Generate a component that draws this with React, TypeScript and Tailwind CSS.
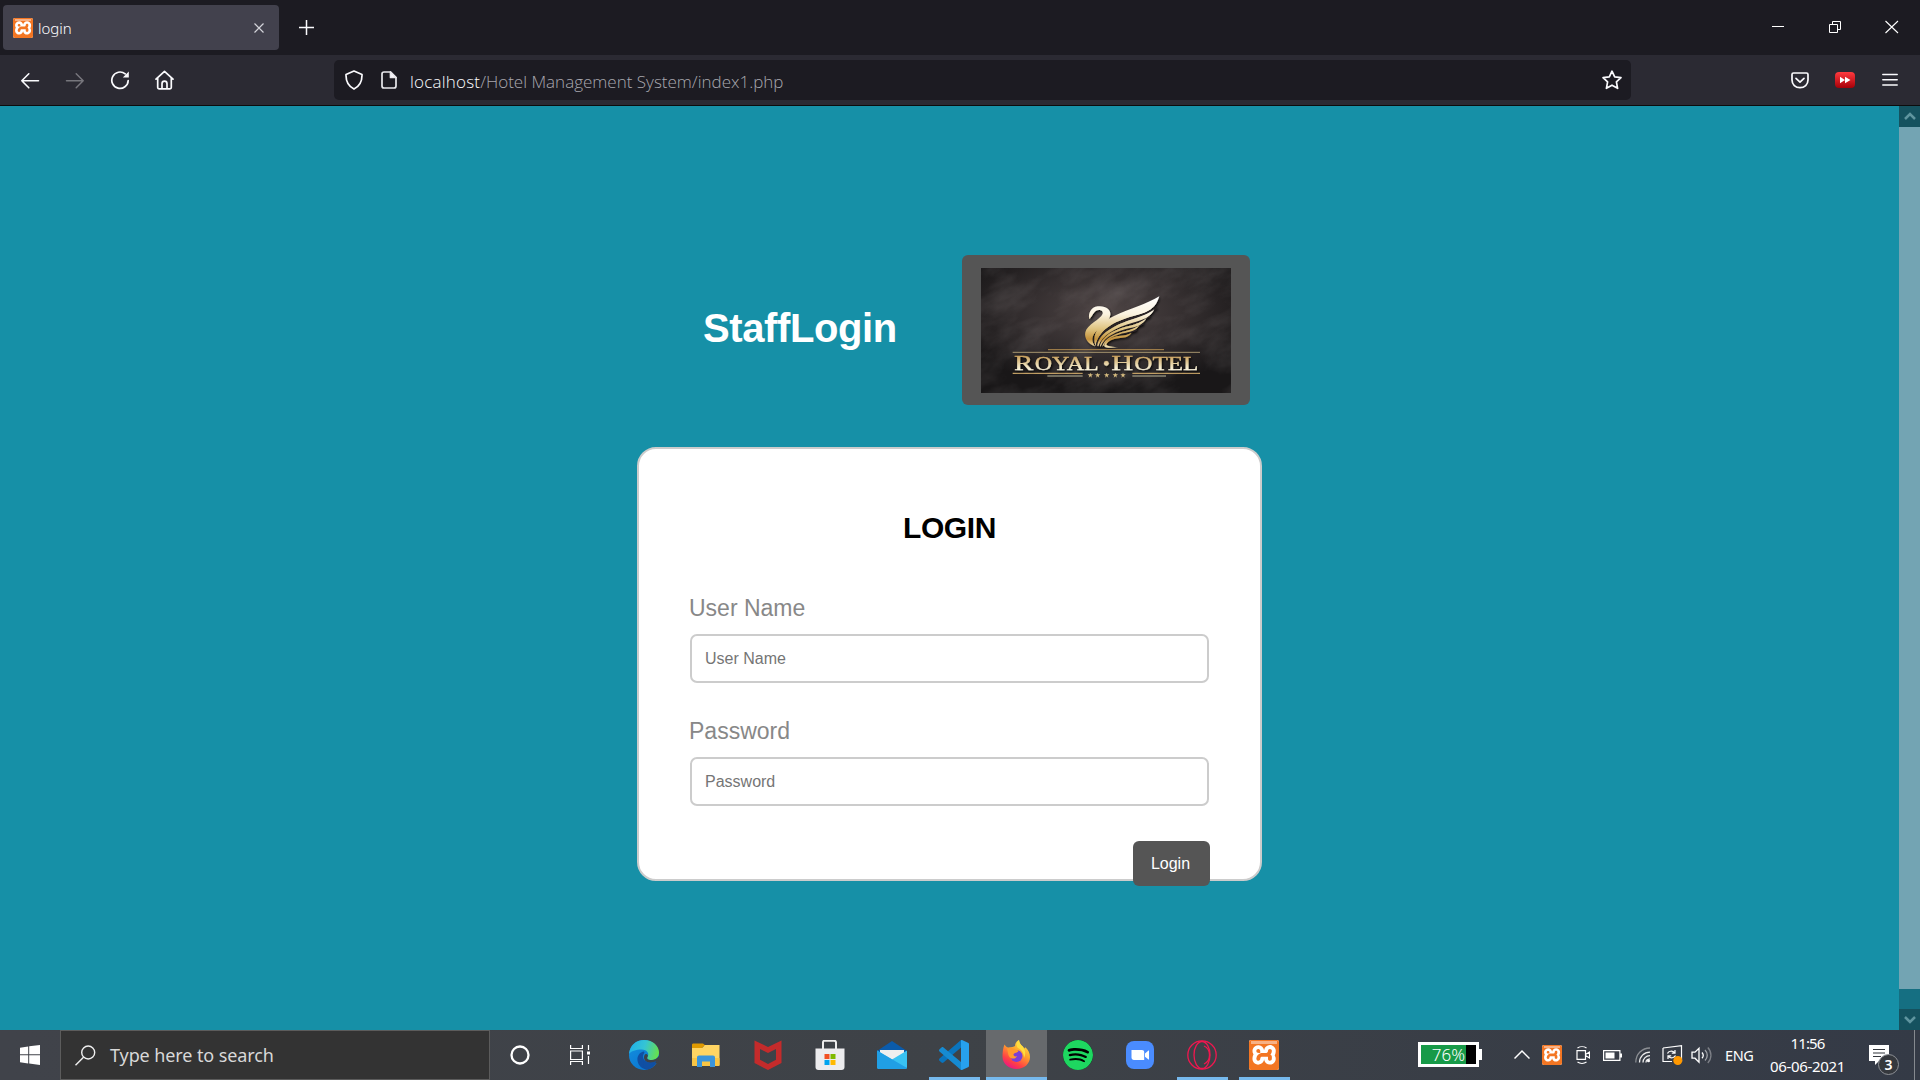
import React from "react";
import { SiXampp, SiSpotify } from "react-icons/si";

function Xampp({ big }: { big?: boolean }) {
  return (
    <span
      className={
        (big ? "h-[30px] w-[30px] " : "h-5 w-5 ") +
        "relative flex shrink-0 items-center justify-center overflow-hidden rounded-[2px] bg-white"
      }
    >
      <SiXampp className={(big ? "h-[32px] w-[32px] " : "h-[22px] w-[22px] ") + "shrink-0 text-[#f37623]"} />
      <span className={(big ? "h-[3px] " : "h-[2px] ") + "absolute inset-x-[2px] top-px bg-[#f8b184]"} />
    </span>
  );
}

function TitleBar() {
  return (
    <div className="flex h-[55px] items-start bg-[#1c1b22] pl-[3px]">
      <div className="mt-[5px] flex h-[45px] w-[276px] items-center rounded-[4px] bg-[#42414d] pr-[14px] pl-[10px]">
        <Xampp />
        <span className="ml-[5px] flex-1 text-[15px] leading-5 font-light text-[#fbfbfe]">login</span>
        <svg width="12" height="12" viewBox="0 0 12 12" stroke="#d3d3da" strokeWidth="1.2" fill="none">
          <path d="M1.5 1.5l9 9M10.5 1.5l-9 9" />
        </svg>
      </div>
      <svg className="mt-5 ml-5" width="15" height="15" viewBox="0 0 15 15" stroke="#fbfbfe" strokeWidth="1.5">
        <path d="M7.5 0v15M0 7.5h15" />
      </svg>
      <div className="mt-[20px] ml-auto flex items-start pr-[21px]">
        <svg width="12" height="14" viewBox="0 0 12 14" stroke="#fff" fill="none">
          <path d="M0 6.5h12" />
        </svg>
        <svg className="ml-[45px]" width="12" height="14" viewBox="0 0 12 14" stroke="#fff" fill="none">
          <path d="M.5 4.500h8v8h-8zM3.500 4.500v-3h8v8h-3" />
        </svg>
        <svg className="ml-[44px]" width="14" height="14" viewBox="0 0 14 14" stroke="#fff" strokeWidth="1.1" fill="none">
          <path d="M.5 1l12.500 12M13 1L.5 13" />
        </svg>
      </div>
    </div>
  );
}

function Toolbar() {
  return (
    <div className="flex h-[51px] items-start border-b border-[#0c0c0d] bg-[#2b2a33] pt-[5px] pl-5">
      <svg className="mt-[12px]" width="20" height="18" viewBox="0 0 20 18" stroke="#fbfbfe" strokeWidth="1.6" fill="none" strokeLinecap="round" strokeLinejoin="round">
        <path d="M18.500 8.800H1.800M8.800 1.800l-7 7 7 7" />
      </svg>
      <svg className="mt-[12px] ml-[25px]" width="20" height="18" viewBox="0 0 20 18" stroke="#77767d" strokeWidth="1.5" fill="none" strokeLinecap="round" strokeLinejoin="round">
        <path d="M1.500 8.800h16.700M11.200 1.800l7 7-7 7" />
      </svg>
      <svg className="mt-[10px] ml-[25px]" width="20" height="20" viewBox="0 0 20 20" stroke="#fbfbfe" strokeWidth="1.7" fill="none" strokeLinecap="round">
        <path d="M18.200 10.500a8.200 8.200 0 1 1-3-6.600" />
        <path d="M18.800 1.500v6h-6z" fill="#fbfbfe" stroke="none" />
      </svg>
      <svg className="mt-[10px] ml-[25px]" width="20" height="20" viewBox="0 0 20 20" stroke="#fbfbfe" strokeWidth="1.700" fill="none" strokeLinejoin="round" strokeLinecap="round">
        <path d="M1 9.200L9.500 1.300 18 9.200M2.700 8v9.500c0 .8.400 1.300 1.300 1.300h11c.9 0 1.300-.5 1.300-1.300V8M7 18.500v-4.800c0-1.500 1-2.500 2.500-2.500s2.500 1 2.500 2.500v4.800" />
      </svg>
      <div className="ml-[159px] flex h-10 w-[1297px] items-center rounded-[5px] bg-[#1c1b22] pr-[9px] pl-[11px]">
        <svg width="18" height="20" viewBox="0 0 18 20" stroke="#fbfbfe" strokeWidth="1.700" fill="none" strokeLinejoin="round">
          <path d="M9 1l8 3.500c.2 6-1.800 11.500-8 14.600C2.800 16 .8 10.500 1 4.500z" />
        </svg>
        <svg className="ml-[18px]" width="16" height="18" viewBox="0 0 16 18" stroke="#e8e8ec" strokeWidth="1.700" fill="none" strokeLinejoin="round">
          <path d="M3 1h6.500L15 6.500V15c0 1.300-.7 2-2 2H3c-1.300 0-2-.7-2-2V3c0-1.300.7-2 2-2z" />
          <path d="M9.500 1v5.500H15z" fill="#fbfbfe" />
        </svg>
        <span className="ml-[13px] flex-1 pt-1 font-['Open_Sans',sans-serif] text-[17px] leading-6 font-light whitespace-nowrap text-[#a9a8af]">
          <span className="tracking-[0.2px] text-[#fbfbfe]">localhost</span>/Hotel Management System/index1.php
        </span>
        <svg width="20" height="20" viewBox="0 0 20 20" stroke="#fbfbfe" strokeWidth="1.700" fill="none" strokeLinejoin="round">
          <path d="M10 1.200l2.700 5.700 6.300.8-4.600 4.200 1.200 6.400-5.600-3.100-5.600 3.100 1.200-6.400L1 7.700l6.300-.8z" />
        </svg>
      </div>
      <div className="mt-[12px] ml-auto flex items-start pr-[22px]">
        <svg width="18" height="17" viewBox="0 0 18 17" stroke="#fbfbfe" strokeWidth="1.700" fill="none" strokeLinecap="round" strokeLinejoin="round">
          <path d="M2.500 1h13c1 0 1.500.5 1.500 1.500V8c0 4.500-3.500 7.700-8 7.700S1 12.500 1 8V2.500C1 1.500 1.500 1 2.500 1z" />
          <path d="M5 6.300l4 3.800 4-3.800" />
        </svg>
        <svg className="ml-[26px]" width="20" height="16" viewBox="0 0 20 16">
          <defs>
            <linearGradient id="yt" x1="0" y1="0" x2="0" y2="1">
              <stop offset="0" stopColor="#ff3a3f" />
              <stop offset="1" stopColor="#a60008" />
            </linearGradient>
          </defs>
          <rect width="20" height="16" rx="4" fill="url(#yt)" />
          <path d="M5 4.800l5 3.200-5 3.200zM10 4.800l5.500 3.200-5.500 3.200z" fill="#fff" />
        </svg>
        <svg className="mt-[1px] ml-[27px]" width="16" height="14" viewBox="0 0 16 14" stroke="#fbfbfe" strokeWidth="1.500" strokeLinecap="round">
          <path d="M.8 1.500h14.400M.8 6.700h14.400M.8 12h14.400" />
        </svg>
      </div>
    </div>
  );
}

function HotelLogo() {
  const stars = [421, 443, 470, 496, 519];
  return (
    <svg width="250" height="125" viewBox="93 69 750 375">
      <defs>
        <radialGradient id="stone" cx="0.5" cy="0.35" r="0.62">
          <stop offset="0" stopColor="#4e4545" />
          <stop offset="0.5" stopColor="#352f30" />
          <stop offset="1" stopColor="#191718" />
        </radialGradient>
        <linearGradient id="gold" gradientUnits="userSpaceOnUse" x1="0" y1="155" x2="0" y2="305">
          <stop offset="0" stopColor="#fff" />
          <stop offset="0.35" stopColor="#fbf3e0" />
          <stop offset="0.65" stopColor="#dfc37f" />
          <stop offset="0.85" stopColor="#c4913a" />
          <stop offset="1" stopColor="#f2dfae" />
        </linearGradient>
        <linearGradient id="letters" gradientUnits="userSpaceOnUse" x1="0" y1="330" x2="0" y2="378">
          <stop offset="0" stopColor="#c79a52" />
          <stop offset="0.6" stopColor="#ead9ae" />
          <stop offset="1" stopColor="#fffbe9" />
        </linearGradient>
        <filter id="veins" x="0" y="0" width="1" height="1">
          <feTurbulence type="fractalNoise" baseFrequency="0.007 0.014" numOctaves="6" seed="8" />
          <feColorMatrix values="0 0 0 0 .72  0 0 0 0 .66  0 0 0 0 .66  1.6 0 0 0 -.62" />
        </filter>
        <filter id="drop">
          <feDropShadow dx="3" dy="4" stdDeviation="3" floodColor="#000" floodOpacity="0.9" />
        </filter>
      </defs>
      <rect x="93" y="69" width="750" height="375" fill="url(#stone)" />
      <g transform="rotate(-25 468 256)">
        <rect x="0" y="-180" width="940" height="860" filter="url(#veins)" opacity="0.17" />
      </g>
      <g filter="url(#drop)">
        <path
          fill="url(#gold)"
          d="M418 223C414 205 422 187 443 184C466 181 483 193 481 209C479 231 452 243 436 262C422 279 427 293 435 304C415 298 402 279 406 262C411 238 451 224 458 206C461 196 446 191 437 198C429 204 427 214 418 223Z"
        />
        <path fill="url(#gold)" d="M628 154C616 192 596 202 548 214C490 230 446 256 437 303C424 268 446 236 492 213C540 190 590 178 628 154Z" />
        <g fill="none" stroke="#2a2425" strokeWidth="5">
          <path d="M620 188C596 205 570 213 540 221C488 237 446 262 440 304" />
          <path d="M600 214C580 226 562 232 538 237C492 249 456 266 447 304" />
          <path d="M580 236C564 244 548 248 528 252C492 260 464 274 455 304" />
          <path d="M560 255C545 262 530 264 508 266C482 270 468 282 462 300" />
        </g>
        <g fill="url(#gold)">
          <path d="M613 193C601 216 585 224 548 233C495 248 457 270 445 304L442 303C444 268 492 242 538 226C570 216 594 207 613 193Z" />
          <path d="M590 218C580 237 566 244 540 249C500 258 464 275 452 304L450 304C455 272 497 252 537 243C560 237 576 230 590 218Z" />
          <path d="M570 238C560 255 550 259 528 263C495 269 470 282 459 304L457 304C463 279 495 265 527 258C546 254 560 248 570 238Z" />
          <path d="M544 264C536 275 528 278 510 279C484 282 472 290 469 299C476 305 490 305 505 307C480 310 460 309 463 299C467 284 487 275 507 273C525 272 535 269 544 264Z" />
        </g>
      </g>
      <g stroke="#b08a4e" strokeWidth="3">
        <path d="M294 314H642" />
        <path d="M188 322H750" stroke="#a4936d" />
        <path d="M188 385H398M547 385H750" stroke="#c3a065" strokeWidth="4" />
        <path d="M292 393H398M547 393H648" stroke="#8a8674" strokeWidth="5" />
      </g>
      <g filter="url(#drop)" fill="url(#letters)" stroke="url(#letters)" strokeWidth="0.8" fontFamily="Liberation Serif, serif">
        <text x="192" y="374" fontSize="64" textLength="58" lengthAdjust="spacingAndGlyphs">R</text>
        <text x="254" y="374" fontSize="56" textLength="192" lengthAdjust="spacingAndGlyphs">OYAL</text>
        <circle cx="469" cy="355" r="7" />
        <text x="484" y="374" fontSize="64" textLength="66" lengthAdjust="spacingAndGlyphs">H</text>
        <text x="553" y="374" fontSize="56" textLength="192" lengthAdjust="spacingAndGlyphs">OTEL</text>
      </g>
      <g fill="#d8bd80">
        {stars.map((x) => (
          <path key={x} transform={`translate(${x} 390)`} d="M0-7l2 5h6l-5 4 2 6-5-4-5 4 2-6-5-4h6z" />
        ))}
      </g>
    </svg>
  );
}

function Field({ label }: { label: string }) {
  return (
    <label className="-mt-[2px] block">
      <span className="-ml-px block h-[33px] text-[23px] leading-[26px] text-[#888]">{label}</span>
      <input
        className="mt-[6px] block h-[49px] w-full rounded-[7px] border-2 border-[#ccc] bg-white px-[13px] pt-px text-[16px] text-black outline-none placeholder:text-[#757575]"
        placeholder={label}
      />
    </label>
  );
}

function Page() {
  return (
    <div className="flex h-[924px]">
      <main className="flex-1 bg-[#1690a7] pt-[149px] pl-[637px] font-['Liberation_Sans',Arial,sans-serif]">
        <div className="flex items-start pl-[66px]">
          <h1 className="mt-[50px] w-[259px] text-[40px] leading-[46px] font-bold tracking-[-0.4px] text-white">StaffLogin</h1>
          <div className="flex h-[150px] w-[288px] items-center justify-center rounded-[6px] bg-[#555]">
            <HotelLogo />
          </div>
        </div>
        <form className="mt-[42px] h-[434px] w-[625px] rounded-[19px] border-2 border-[#ccc] bg-white px-[51px] pt-[62px]">
          <h2 className="text-center text-[30px] leading-[34px] font-bold tracking-[-0.4px] text-black">LOGIN</h2>
          <div className="mt-[52px] flex w-[519px] flex-col gap-[37px]">
            <Field label="User Name" />
            <Field label="Password" />
          </div>
          <div className="-mr-px mt-[35px] flex justify-end">
            <button type="button" className="h-[45px] w-[77px] rounded-[6px] bg-[#555] pt-px pr-[2px] text-[16px] text-white">
              Login
            </button>
          </div>
        </form>
      </main>
      <div className="flex w-[21px] flex-col bg-[#156f82]">
        <div className="flex h-[21px] items-center justify-center bg-[#15525f] pb-[2px]">
          <svg width="12" height="10" viewBox="0 0 12 10" fill="none" stroke="#5f959f" strokeWidth="2.500">
            <path d="M1 8l5-5 5 5" />
          </svg>
        </div>
        <div className="h-[862px] bg-[#73a4b3]" />
        <div className="mt-auto flex h-[21px] items-center justify-center bg-[#15525f]">
          <svg width="12" height="10" viewBox="0 0 12 10" fill="none" stroke="#5f959f" strokeWidth="2.500">
            <path d="M1 2l5 5 5-5" />
          </svg>
        </div>
      </div>
    </div>
  );
}

function TaskbarApp({ children, line, active }: { children: React.ReactNode; line?: boolean; active?: boolean }) {
  return (
    <div className="flex w-[62px] shrink-0 flex-col items-center">
      <div className={(active ? "w-[61px] bg-[#676a6d] " : "w-[51px] ") + "flex h-[47px] items-center justify-center pt-[3px]"}>
        {children}
      </div>
      <div className={(active ? "w-[61px] " : "w-[51px] ") + (line || active ? "bg-[#76b9ed] " : "") + "h-[3px]"} />
    </div>
  );
}

function Apps() {
  return (
    <div className="flex">
      <TaskbarApp>
        <svg width="30" height="30" viewBox="0 0 30 30">
          <defs>
            <linearGradient id="e1" x1="0" y1="0.3" x2="1" y2="0.5">
              <stop offset="0" stopColor="#1fb0e8" />
              <stop offset="0.5" stopColor="#35c4d5" />
              <stop offset="1" stopColor="#66e04d" />
            </linearGradient>
            <linearGradient id="e2" x1="0" y1="0" x2="0.8" y2="1">
              <stop offset="0" stopColor="#1590df" />
              <stop offset="1" stopColor="#0873cf" />
            </linearGradient>
          </defs>
          <circle cx="15" cy="15" r="15" fill="url(#e2)" />
          <path d="M0 14C1 5 7 0 15 0c9 0 15 6 15 12.500 0 5-3.500 7.500-7.500 7.500-4 0-5-1.500-4-3 2-3 0-7.500-6-7.500C7 9.500 2 11 0 14z" fill="url(#e1)" />
          <path d="M14.500 11.600c-4 1-6.500 4.500-6 9 .5 5 5 9 10 9 4-1 7.500-4 9.500-8-4 2-9 2-11.500-.2-2.500-2.300-3.500-5-1.500-7.800 1-1.500 0-2-.5-2z" fill="#104fa3" />
          <path d="M18.500 17c-1 1.500 0 3 4 3 3 0 5.500-1.500 7.500-4v4l-2 3-5 .6c-4 0-8-2.600-8-6 0-2 1-3.500 2-3.500 1.500 0 2.500 1.500 1.500 2.900z" fill="#3e4247" />
          <path d="M15.500 20.500c3 2.500 8 2.500 12 .6-2 4-5 7-9.500 8.500-3-1-5-5-2.500-9.100z" fill="#104fa3" />
        </svg>
      </TaskbarApp>
      <TaskbarApp>
        <svg width="28" height="24" viewBox="0 0 28 24">
          <path d="M0 2C0 1 .5.500 1.500.500H11l3 2.500h-2L10 5H0z" fill="#e09a00" />
          <path d="M13 2h14.500v20c0 .5-.5 1-1 1H1c-.5 0-1-.5-1-1V5h10z" fill="#ffd563" />
          <path d="M0 15h27.500v7c0 .5-.5 1-1 1H1c-.5 0-1-.5-1-1z" fill="#f9c544" />
          <path d="M7 12.500h14c1.200 0 2 .8 2 2V24h-5v-5.500H10V24H5v-9.500c0-1.200.8-2 2-2z" fill="#3a95dc" />
        </svg>
      </TaskbarApp>
      <TaskbarApp>
        <svg width="28" height="30" viewBox="0 0 28 30">
          <path d="M.5.500L14 7 27.500.500V23L14 30 .5 23zM6 9v10.700l8 4.300 8-4.300V9l-8 4z" fill="#c42b2b" fillRule="evenodd" />
        </svg>
      </TaskbarApp>
      <TaskbarApp>
        <svg width="30" height="30" viewBox="0 0 30 30">
          <path d="M8 9V2.500C8 1 8.700.700 10 .700h9c1.300 0 2 .3 2 1.800V9" fill="none" stroke="#eee" strokeWidth="2" />
          <path d="M.500 8.500h29V27c0 2-1 3-3 3h-23c-2 0-3-1-3-3z" fill="#ececee" />
          <path d="M9.500 14h5v5h-5z" fill="#f25022" />
          <path d="M15.500 14h5v5h-5z" fill="#7fba00" />
          <path d="M9.500 20h5v5h-5z" fill="#00a4ef" />
          <path d="M15.500 20h5v5h-5z" fill="#ffb900" />
        </svg>
      </TaskbarApp>
      <TaskbarApp>
        <svg width="30" height="28" viewBox="0 0 30 28">
          <path d="M0 10L15 0l15 10v4H0z" fill="#0a5bab" />
          <path d="M3 9h24v10H3z" fill="#efefef" />
          <path d="M0 9.500L15 18.500 30 9.500V26c0 1.200-.8 2-2 2H2c-1.200 0-2-.8-2-2z" fill="#39c2f2" />
          <path d="M0 9.500L30 27c-.3.600-1 1-2 1H2c-1.200 0-2-.8-2-2z" fill="#209fe5" />
        </svg>
      </TaskbarApp>
      <TaskbarApp line>
        <svg width="30" height="30" viewBox="0 0 30 30">
          <path d="M22 0v7.500L4.500 22.500c-.7.600-1.300.5-2 0L.500 20.700c-.7-.6-.7-1.500 0-2.100z" fill="#0a74bd" />
          <path d="M22 30v-8L4.500 7.500c-.7-.6-1.300-.5-2 0L.500 9.300c-.7.600-.7 1.500 0 2.100z" fill="#168bd2" />
          <path d="M22 .300c.7-.5 1-.3 1.500 0l5.500 2.500c.7.300 1 .8 1 1.500v21.400c0 .7-.3 1.200-1 1.500L23.500 29.700c-.5.300-1 .3-1.500 0z" fill="#27a1ee" />
        </svg>
      </TaskbarApp>
      <TaskbarApp active>
        <svg width="30" height="30" viewBox="0 0 30 30">
          <defs>
            <linearGradient id="f1" x1="0.8" y1="0" x2="0.25" y2="1">
              <stop offset="0" stopColor="#ffe94a" />
              <stop offset="0.4" stopColor="#ffa42c" />
              <stop offset="0.75" stopColor="#ff4144" />
              <stop offset="1" stopColor="#e8118c" />
            </linearGradient>
          </defs>
          <path d="M3.500 4.500c1 1.500 2 2.500 3.500 3l4.500-.5c1-.2 2-.5 2.500-1C14 3 16 1 18 0c.3 3 1.500 4.500 3.500 6.200.8.800 1.400 1.500 1.500 2.500l1.300-1.500c3 2.500 4.700 6 4.700 9.800 0 7-6 12-13.500 12S1.500 24 1.500 16.500c0-4 .5-8.500 2-12z" fill="url(#f1)" />
          <circle cx="15.500" cy="16" r="6" fill="#7a3fd6" />
          <path d="M6 8.500c3-1.500 6-.5 8 1l3.500 1c0 2.500-5 2-5 4 0 1.500 1.500 2.500 3.500 1.500-1 3-5 3.500-7.500 1C7 15.500 7 12 6 8.500z" fill="#ff9a2e" />
          <path d="M18 0c.3 3 1.500 4.500 3.500 6.200 3 3 3.500 7.800 1.500 11.800 0-4-2-8.500-6-10C14.500 5 15.500 2 18 0z" fill="#ffdd3f" />
        </svg>
      </TaskbarApp>
      <TaskbarApp>
        <span className="flex h-[30px] w-[30px] rounded-full bg-black">
          <SiSpotify className="h-[30px] w-[30px] text-[#1ed760]" />
        </span>
      </TaskbarApp>
      <TaskbarApp>
        <svg width="28" height="28" viewBox="0 0 28 28">
          <rect width="28" height="28" rx="8" fill="#4a8cff" />
          <path d="M5.500 9H16c1.300 0 2.200.9 2.200 2.200V19H8c-1.500 0-2.500-1-2.500-2.500zM19 12.500l3.500-3c.3-.2.500 0 .5.300v8.500c0 .4-.3.400-.5.200l-3.500-2.700z" fill="#fff" />
        </svg>
      </TaskbarApp>
      <TaskbarApp line>
        <svg width="30" height="30" viewBox="0 0 30 30" fill="none" stroke="#f0174f" strokeWidth="1.300">
          <circle cx="15" cy="15" r="14.200" />
          <ellipse cx="15" cy="15" rx="8" ry="13.500" />
          <path d="M17 6c3.500 1.500 5.500 5 5.500 9S20.500 22.500 17 24" />
        </svg>
      </TaskbarApp>
      <TaskbarApp line>
        <Xampp big />
      </TaskbarApp>
    </div>
  );
}

function Tray() {
  return (
    <div className="ml-auto flex h-[50px] items-start text-[15px] text-white">
      <div className="mt-3 flex w-[64px] items-center">
        <div className="flex h-[25px] w-[61px] border-[3px] border-white bg-black">
          <div className="flex w-[45px] items-center justify-end bg-[#179a48] pr-px">
            <span className="text-[17px] leading-none font-light">76%</span>
          </div>
        </div>
        <div className="h-[11px] w-[3px] bg-white" />
      </div>
      <svg className="mt-[19px] ml-[32px]" width="16" height="11" viewBox="0 0 16 11" fill="none" stroke="#fff" strokeWidth="1.500">
        <path d="M.5 9.500L8 2l7.500 7.500" />
      </svg>
      <div className="mt-[15px] ml-3">
        <Xampp />
      </div>
      <svg className="mt-[16px] ml-[14px]" width="14" height="18" viewBox="0 0 14 18" fill="none" stroke="#fff" strokeWidth="1.200">
        <path d="M1 4.600h8.500v8.800H1zM9.500 8.500l4-2.500v6l-4-2.500M1.500 2C4 .3 8 .3 10.500 2M1.500 16c2.500 1.700 6.500 1.700 9 0" />
      </svg>
      <svg className="mt-5 ml-[13px]" width="19" height="11" viewBox="0 0 19 11">
        <path d="M.6.600h16.300v9.800H.6z" fill="none" stroke="#fff" strokeWidth="1.200" />
        <path d="M2.500 2.500h9v6h-9zM17 3.500h2v4h-2z" fill="#fff" />
      </svg>
      <svg className="mt-[17px] ml-[13px]" width="16" height="16" viewBox="0 0 16 16" fill="none" stroke="#eee" strokeWidth="1.300">
        <path d="M.8 15.500C.8 7 7 1 15 1" stroke="#8b8e93" />
        <path d="M4.500 15.500c0-6 4.500-10.300 10.500-10.300M8 15.500c0-4 3-6.800 7-6.800M11 15.500c0-2.200 1.500-3.500 4-3.700" />
        <circle cx="13.500" cy="13.800" r="1.500" fill="#fff" stroke="none" />
      </svg>
      <svg className="mt-[14px] ml-[11px]" width="21" height="22" viewBox="0 0 21 22" fill="none" stroke="#fff" strokeWidth="1.200">
        <path d="M1 4l18.500-2.300v16M1 4v13.500h9" />
        <path d="M5.500 9.500c1-2.500 5-3.300 7-.8M13 6v3.200H9.800M13.500 11.500c-1 2.500-5 3.300-7 .8M6 15v-3.200h3.200" />
        <circle cx="15.800" cy="16.500" r="4.500" fill="#ff9800" stroke="none" />
      </svg>
      <svg className="mt-[16px] ml-[8px]" width="21" height="19" viewBox="0 0 21 19" fill="none" stroke="#fff" strokeWidth="1.300">
        <path d="M1 6.200h3l4-4v14l-4-4H1z" />
        <path d="M11 6.500c1.500 1.700 1.500 4 0 5.700" />
        <path d="M14 4c3 3 3 7.500 0 10.500" stroke="#a0a3a8" />
        <path d="M16.800 1.500c4.200 4.500 4.200 11 0 15.500" stroke="#7d8087" />
      </svg>
      <span className="mt-[15px] ml-[13px] w-[28px] text-[14.500px] leading-5 tracking-[-0.400px]">ENG</span>
      <div className="ml-[12px] flex w-[85px] flex-col items-center pt-[2px] text-[15px] leading-[23px] tracking-[-0.350px]">
        <span className="tracking-[-0.900px]">11:56</span>
        <span>06-06-2021</span>
      </div>
      <svg className="mt-[14px] ml-[19px]" width="32" height="32" viewBox="0 0 32 32">
        <path d="M0 1h20v16H10l-4 4v-4H0z" fill="#fff" />
        <path d="M4 5.500h12M4 9h12M4 12.500h8" stroke="#33373d" strokeWidth="1.200" />
        <circle cx="19.500" cy="20.500" r="10" fill="#35383d" stroke="#8e9196" strokeWidth="1" />
        <text x="19.500" y="25.500" textAnchor="middle" fontFamily="Noto Sans, sans-serif" fontSize="14" fontWeight="600" fill="#fff">3</text>
      </svg>
      <div className="mr-[5px] ml-[13px] h-[50px] w-px bg-[#85898f]" />
    </div>
  );
}

function Taskbar() {
  return (
    <div className="flex h-[50px] bg-linear-to-r from-[#40434a] via-[#3e4247] to-[#343a46] font-['Noto_Sans',sans-serif]">
      <div className="flex w-[60px] items-center justify-center">
        <svg width="20" height="20" viewBox="0 0 20 20" fill="#fff">
          <path d="M0 2.700L8.200 1.500v7.800H0zM9.200 1.300L20 0v9.300H9.200zM0 10.300h8.200v8.100L0 17.200zM9.200 10.300H20V20L9.200 18.500z" />
        </svg>
      </div>
      <div className="flex w-[430px] items-center border border-[#5c5c5c] bg-[#333] pl-[14px]">
        <svg width="21" height="21" viewBox="0 0 21 21" fill="none" stroke="#f0f0f0" strokeWidth="1.400">
          <circle cx="13.200" cy="7.500" r="6.500" />
          <path d="M8.500 12.300L.5 20.300" />
        </svg>
        <span className="ml-[14px] text-[18px] leading-6 tracking-[-0.100px] text-[#d8d8d8]">Type here to search</span>
      </div>
      <div className="flex w-[60px] items-center justify-center">
        <svg width="20" height="20" viewBox="0 0 20 20" fill="none" stroke="#fff" strokeWidth="2.300">
          <circle cx="10" cy="10" r="8.500" />
        </svg>
      </div>
      <div className="flex w-[63px] items-center pl-5">
        <svg width="20" height="20" viewBox="0 0 20 20" fill="none" stroke="#fff" strokeWidth="1.200">
          <path d="M.6 0v3.500h11.800V0M.6 6h11.800v8.500H.6zM.6 20v-3.500h11.800V20M18.500 0v5M18.500 11v8" />
          <path d="M17 6.500h3v3h-3z" fill="#fff" stroke="none" />
        </svg>
      </div>
      <Apps />
      <Tray />
    </div>
  );
}

export default function App() {
  return (
    <div className="h-[1080px] w-[1920px] overflow-hidden font-['Noto_Sans',sans-serif]">
      <TitleBar />
      <Toolbar />
      <Page />
      <Taskbar />
    </div>
  );
}
